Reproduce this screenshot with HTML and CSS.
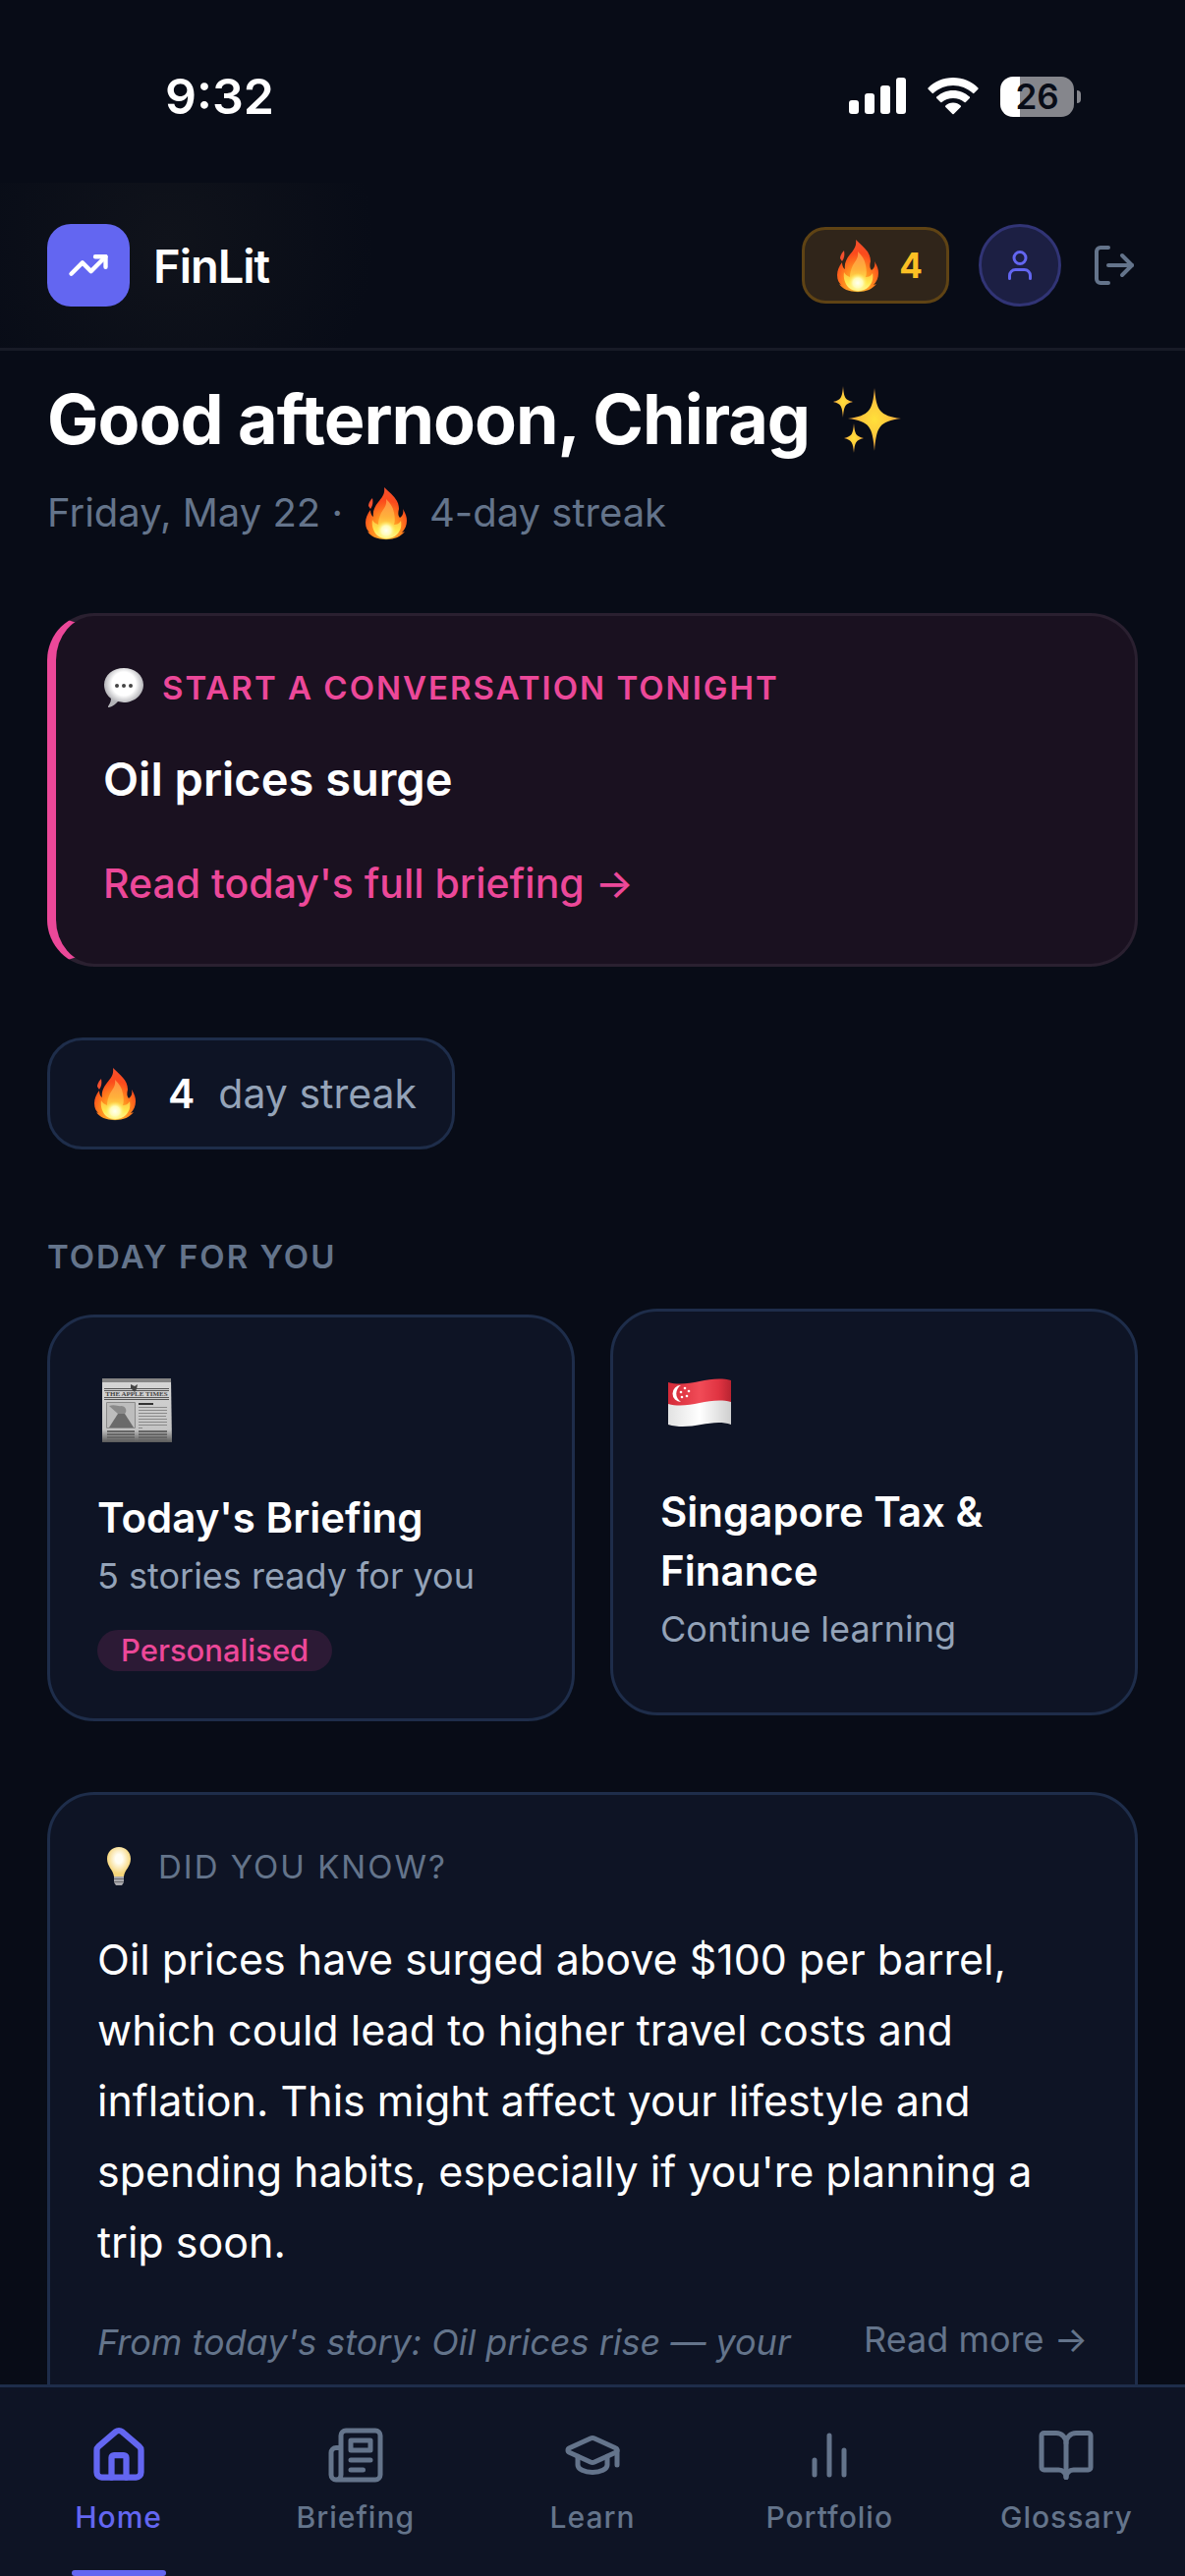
FILE: index.html
```html
<!DOCTYPE html>
<html lang="en">
<head>
    <meta charset="UTF-8">
    <meta name="viewport" content="width=device-width, initial-scale=1.0">
    <title>FinLit</title>
    <link rel="stylesheet" href="styles.css">
</head>
<body>
    <!-- Shared emoji artwork -->
    <svg class="sprite" width="0" height="0" aria-hidden="true">
        <defs>
            <radialGradient id="flameOuter" cx="50%" cy="85%" r="85%">
                <stop offset="0" stop-color="#ffd23c"/>
                <stop offset="0.4" stop-color="#ff8a1e"/>
                <stop offset="0.7" stop-color="#fb4a1c"/>
                <stop offset="1" stop-color="#f4502f"/>
            </radialGradient>
            <linearGradient id="flameInner" x1="0" y1="0" x2="0" y2="1">
                <stop offset="0" stop-color="#ff8f45"/>
                <stop offset="0.45" stop-color="#ffb13b"/>
                <stop offset="0.8" stop-color="#ffe94f"/>
                <stop offset="1" stop-color="#fff79a"/>
            </linearGradient>
            <radialGradient id="flameCore">
                <stop offset="0" stop-color="#fffff0"/>
                <stop offset="0.5" stop-color="#fffbb8"/>
                <stop offset="1" stop-color="#ffee58" stop-opacity="0"/>
            </radialGradient>
        </defs>
        <symbol id="flame" viewBox="0 0 60 60">
            <path fill="url(#flameOuter)" d="M28 4c1 7-2 10-6 15-4 5-6 10-5 15-2-1-3-4-3-7-3 4-5 8-5 13 0 5 2 8 4 10l-2-1c3 5 10 8 19 8s15-3 19-8l-3 1c3-3 5-7 5-12 0-4-1-7-4-12 1 4 0 7-3 9-2-2-2-5-1-9 0-10-8-15-15-22z"/>
            <path fill="#f4502f" d="M16 15c-3 3-4 6-4 8l2 3c2-3 3-6 2-11z"/>
            <path fill="url(#flameInner)" d="M30 16c1 6-2 9-5 14-2 4-3 8-3 12-3-1-5-3-6-5-1 6 1 12 5 16 5 4 15 4 20-1 4-4 5-9 4-14-2 3-4 4-7 4 1-3 1-7 0-12-1-6-4-10-8-14z"/>
            <ellipse cx="30" cy="48" rx="10" ry="10" fill="url(#flameCore)"/>
        </symbol>
    </svg>

    <div class="status-bar">
        <span class="status-time">9:32</span>
        <div class="status-icons">
            <svg class="signal" viewBox="0 0 58 38" aria-hidden="true">
                <rect x="0" y="23" width="10" height="14" rx="3"/>
                <rect x="16" y="16" width="10" height="21" rx="3"/>
                <rect x="32" y="8" width="10" height="29" rx="3"/>
                <rect x="48" y="0" width="10" height="37" rx="3"/>
            </svg>
            <svg class="wifi" viewBox="0 0 52 38" aria-hidden="true">
                <path d="M26 0C16 0 7 4 0.6 10.400a1 1 0 0 0 0 1.400l4 4a1 1 0 0 0 1.400 0C11.500 10.800 18.500 8 26 8s14.500 2.800 20 7.800a1 1 0 0 0 1.400 0l4-4a1 1 0 0 0 0-1.400C45 4 36 0 26 0z"/>
                <path d="M26 13c-6.500 0-12.400 2.500-16.800 6.600a1 1 0 0 0 0 1.400l4 4a1 1 0 0 0 1.400 0C17.700 22.200 21.700 21 26 21s8.300 1.200 11.400 4a1 1 0 0 0 1.400 0l4-4a1 1 0 0 0 0-1.400C38.400 15.500 32.500 13 26 13z"/>
                <path d="M26 25.500c-3 0-5.700 1.200-7.700 3a1 1 0 0 0 0 1.500l7 7a1 1 0 0 0 1.400 0l7-7a1 1 0 0 0 0-1.500c-2-1.800-4.700-3-7.700-3z"/>
            </svg>
            <div class="battery"><span class="battery-level">26</span></div>
        </div>
    </div>

    <header class="app-header">
        <a href="#" class="brand">
            <span class="brand-mark">
                <svg class="icon" viewBox="0 0 24 24" aria-hidden="true">
                    <path d="M22 7l-8.500 8.500-5-5L2 17"/>
                    <path d="M16 7h6v6"/>
                </svg>
            </span>
            <span class="brand-name">FinLit</span>
        </a>
        <div class="header-actions">
            <span class="streak-badge">
                <svg class="flame" aria-hidden="true"><use href="#flame"/></svg>
                4
            </span>
            <button type="button" class="avatar" aria-label="Profile">
                <svg class="icon" viewBox="0 0 24 24" aria-hidden="true">
                    <path d="M19 21v-2a4 4 0 0 0-4-4H9a4 4 0 0 0-4 4v2"/>
                    <circle cx="12" cy="7" r="4"/>
                </svg>
            </button>
            <button type="button" class="logout" aria-label="Log out">
                <svg class="icon" viewBox="0 0 24 24" aria-hidden="true">
                    <path d="M9 21H5a2 2 0 0 1-2-2V5a2 2 0 0 1 2-2h4"/>
                    <path d="M16 17l5-5-5-5"/>
                    <path d="M21 12H9"/>
                </svg>
            </button>
        </div>
    </header>

    <main>
        <h1 class="greeting">
            Good afternoon, Chirag
            <svg class="sparkles" viewBox="0 0 70 68" aria-hidden="true">
                <defs>
                    <radialGradient id="sparkleFill">
                        <stop offset="0" stop-color="#ffe03a"/>
                        <stop offset="0.5" stop-color="#fdc93c"/>
                        <stop offset="1" stop-color="#e79a3c"/>
                    </radialGradient>
                </defs>
                <g fill="url(#sparkleFill)">
                    <path d="M42 2c2 23 5 28 27 31-22 3-25 8-27 33-2-25-5-30-27-33 22-3 25-8 27-31z"/>
                    <path d="M10 0c1 12 2 14 10 16-8 2-9 4-10 16-1-12-2-14-10-16 8-2 9-4 10-16z"/>
                    <path d="M21 38c1 11 2 13 10 15-8 2-9 4-10 15-1-11-2-13-10-15 8-2 9-4 10-15z"/>
                </g>
            </svg>
        </h1>
        <p class="subtitle">
            <span>Friday, May 22 ·</span>
            <svg class="flame" aria-hidden="true"><use href="#flame"/></svg>
            <span>4-day streak</span>
        </p>

        <section class="card conversation">
            <p class="label">
                <svg class="bubble" viewBox="0 0 42 42" aria-hidden="true">
                    <defs>
                        <radialGradient id="bubbleFill" cy="40%">
                            <stop offset="0.6" stop-color="#ffffff"/>
                            <stop offset="1" stop-color="#b4b4b8"/>
                        </radialGradient>
                    </defs>
                    <path fill="url(#bubbleFill)" d="M21 1C10 1 1 8 1 18c0 6 3 11 7 14 0 4-2 6-3 8 0 1 0 1 1 1 4-1 7-4 9-6l6 1c11 0 20-8 20-18S32 1 21 1z"/>
                    <circle cx="14" cy="19" r="2" fill="#444"/>
                    <circle cx="21" cy="19" r="2" fill="#444"/>
                    <circle cx="28" cy="19" r="2" fill="#444"/>
                </svg>
                Start a conversation tonight
            </p>
            <h2 class="conversation-title">Oil prices surge</h2>
            <a href="#" class="conversation-link">Read today's full briefing →</a>
        </section>

        <div class="streak-chip">
            <svg class="flame" aria-hidden="true"><use href="#flame"/></svg>
            <strong>4</strong>
            <span>day streak</span>
        </div>

        <h2 class="label section-label">Today for you</h2>
        <div class="tiles">
            <a href="#" class="card tile">
                <svg class="tile-icon" viewBox="0 0 80 94" aria-hidden="true">
                    <defs>
                        <linearGradient id="paper" x1="0" y1="0" x2="0" y2="1">
                            <stop offset="0" stop-color="#d6d6d6"/>
                            <stop offset="0.8" stop-color="#c4c4c4"/>
                            <stop offset="1" stop-color="#5a5a5a"/>
                        </linearGradient>
                    </defs>
                    <path fill="url(#paper)" d="M5 14h70l1 65H5z"/>
                    <path fill="#858585" d="M5 14h70v4H5z"/>
                    <path stroke="#555" d="M7 24.500h66M7 26.500h66M7 33.500h66M7 35.500h66"/>
                    <path fill="#444" d="M34 20l4 2 3-2-1 5-2 3-4-4z"/>
                    <text x="40" y="32" class="masthead">THE APPLE TIMES</text>
                    <path fill="#bdbdbd" stroke="#8a8a8a" d="M9.500 38.500h29v26h-29z"/>
                    <path fill="#6a6a6a" d="M12 64l9-14h7l9 14z"/>
                    <path fill="#8a8a8a" d="M12 42c6-2 10 1 12 0 5 0 7 5 4 8h-7z"/>
                    <path stroke="#333" stroke-width="2" d="M42 40h15"/>
                    <path stroke="#8a8a8a" d="M42 43.500h29M42 46.500h29M42 49.500h29M42 52.500h28M42 55.500h29M42 58.500h29M42 61.500h29M42 64.500h4"/>
                    <path stroke="#666" stroke-width="2" d="M10 68h28M10 71h28M10 74h28M10 77h28M42 68h29M42 71h29M42 74h29M42 77h29"/>
                </svg>
                <h3 class="tile-title">Today's Briefing</h3>
                <p class="tile-text">5 stories ready for you</p>
                <span class="pill">Personalised</span>
            </a>
            <a href="#" class="card tile raised">
                <svg class="tile-icon" viewBox="0 0 80 94" aria-hidden="true">
                    <defs>
                        <linearGradient id="flagRed">
                            <stop offset="0" stop-color="#d42a38"/>
                            <stop offset="0.5" stop-color="#f14b57"/>
                            <stop offset="0.8" stop-color="#e03442"/>
                            <stop offset="1" stop-color="#b92431"/>
                        </linearGradient>
                        <linearGradient id="flagWhite">
                            <stop offset="0" stop-color="#e2e2e2"/>
                            <stop offset="0.5" stop-color="#ffffff"/>
                            <stop offset="1" stop-color="#cfcfcf"/>
                        </linearGradient>
                    </defs>
                    <path fill="url(#flagWhite)" d="M8 44c22 6 42-8 64-2v25c-20-7-40 7-64 0z"/>
                    <path fill="url(#flagRed)" d="M8 24c22 6 42-8 64-2v22c-22-6-42 8-64 2z"/>
                    <path fill="#fff" d="M21 27a8.500 8.500 0 1 0 0 17a10 10 0 0 1 0-17z"/>
                    <g fill="#fff">
                        <circle cx="25" cy="30" r="1.300"/>
                        <circle cx="21" cy="34" r="1.300"/>
                        <circle cx="29" cy="33" r="1.300"/>
                        <circle cx="22" cy="39" r="1.300"/>
                        <circle cx="27" cy="38" r="1.300"/>
                    </g>
                </svg>
                <h3 class="tile-title">Singapore Tax &amp; Finance</h3>
                <p class="tile-text">Continue learning</p>
            </a>
        </div>

        <section class="card did-you-know">
            <p class="label">
                <svg class="bulb" viewBox="0 0 44 42" aria-hidden="true">
                    <defs>
                        <radialGradient id="bulbFill" cy="40%">
                            <stop offset="0.3" stop-color="#fffdf2"/>
                            <stop offset="1" stop-color="#f6d67c"/>
                        </radialGradient>
                    </defs>
                    <path fill="url(#bulbFill)" d="M22 1c-7 0-12 5-12 12 0 8 6 11 7 18h10c1-7 7-10 7-18 0-7-5-12-12-12z"/>
                    <path fill="#a9a9ad" d="M17 31h10v6l-2 3h-6l-2-3z"/>
                    <path stroke="#6c6c70" d="M17 33.500h10M17 36.500h10"/>
                </svg>
                Did you know?
            </p>
            <p class="fact">Oil prices have surged above $100 per barrel, which could lead to higher travel costs and inflation. This might affect your lifestyle and spending habits, especially if you're planning a trip soon.</p>
            <div class="fact-footer">
                <em class="fact-source">From today's story: Oil prices rise — your</em>
                <a href="#" class="read-more">Read more →</a>
            </div>
        </section>
    </main>

    <nav class="tab-bar">
        <a href="#" class="tab active">
            <svg class="icon" viewBox="0 0 24 24" aria-hidden="true">
                <path d="M15 21v-8a1 1 0 0 0-1-1h-4a1 1 0 0 0-1 1v8"/>
                <path d="M3 10a2 2 0 0 1 .709-1.528l7-5.999a2 2 0 0 1 2.582 0l7 5.999A2 2 0 0 1 21 10v9a2 2 0 0 1-2 2H5a2 2 0 0 1-2-2z"/>
            </svg>
            Home
        </a>
        <a href="#" class="tab">
            <svg class="icon" viewBox="0 0 24 24" aria-hidden="true">
                <path d="M4 22h16a2 2 0 0 0 2-2V4a2 2 0 0 0-2-2H8a2 2 0 0 0-2 2v16a2 2 0 0 1-2 2Zm0 0a2 2 0 0 1-2-2v-9c0-1.100.9-2 2-2h2"/>
                <path d="M18 14h-8M15 18h-5M10 6h8v4h-8V6Z"/>
            </svg>
            Briefing
        </a>
        <a href="#" class="tab">
            <svg class="icon" viewBox="0 0 24 24" aria-hidden="true">
                <path d="M21.420 10.922a1 1 0 0 0-.019-1.838L12.830 5.180a2 2 0 0 0-1.660 0L2.600 9.080a1 1 0 0 0 0 1.832l8.570 3.908a2 2 0 0 0 1.660 0z"/>
                <path d="M22 10v6M6 12.500V16a6 3 0 0 0 12 0v-3.500"/>
            </svg>
            Learn
        </a>
        <a href="#" class="tab">
            <svg class="icon" viewBox="0 0 24 24" aria-hidden="true">
                <path d="M18 20V10M12 20V4M6 20v-6"/>
            </svg>
            Portfolio
        </a>
        <a href="#" class="tab">
            <svg class="icon" viewBox="0 0 24 24" aria-hidden="true">
                <path d="M12 7v14"/>
                <path d="M3 18a1 1 0 0 1-1-1V4a1 1 0 0 1 1-1h5a4 4 0 0 1 4 4 4 4 0 0 1 4-4h5a1 1 0 0 1 1 1v13a1 1 0 0 1-1 1h-6a3 3 0 0 0-3 3 3 3 0 0 0-3-3z"/>
            </svg>
            Glossary
        </a>
    </nav>
</body>
</html>
```
FILE: styles.css
```css
* {
    box-sizing: border-box;
}

body {
    font-family: Inter, 'Liberation Sans', sans-serif;
    margin: 0;
    background-color: #080c17;
    color: #fff;
    font-size: 40px;
    line-height: 63px;
}

h1, h2, h3, p {
    margin: 0;
}

a {
    color: inherit;
    text-decoration: none;
}

button {
    background: none;
    border: none;
    padding: 0;
    cursor: pointer;
}

svg {
    display: block;
    flex-shrink: 0;
}

.sprite {
    position: absolute;
}

.icon {
    fill: none;
    stroke: currentColor;
    stroke-width: 2;
    stroke-linecap: round;
    stroke-linejoin: round;
}

.flame {
    width: 60px;
    height: 60px;
}

/* Status bar */
.status-bar {
    display: flex;
    justify-content: space-between;
    align-items: center;
    height: 186px;
    padding: 10px 113px 0 168px;
}

.status-time {
    font-size: 50px;
    font-weight: 600;
}

.status-icons {
    display: flex;
    align-items: center;
    gap: 22px;
    fill: #fff;
}

.signal {
    width: 58px;
    height: 38px;
}

.wifi {
    width: 52px;
    height: 38px;
}

.battery {
    position: relative;
    width: 75px;
    height: 41px;
    border-radius: 13px;
    background: linear-gradient(90deg, #fff 20px, #85868c 20px);
    color: #080c17;
    font-size: 35px;
    font-weight: 600;
    line-height: 41px;
    text-align: center;
}

.battery::after {
    content: "";
    position: absolute;
    left: 78px;
    top: 14px;
    width: 4px;
    height: 13px;
    border-radius: 0 6px 6px 0;
    background: #85868c;
}

/* Header */
.app-header {
    display: flex;
    justify-content: space-between;
    align-items: center;
    height: 171px;
    padding: 0 48px;
    border-bottom: 3px solid #181b27;
    background: radial-gradient(circle 210px at 170px 60px, #10131b, transparent);
}

.brand {
    display: flex;
    align-items: center;
    gap: 24px;
}

.brand-mark {
    display: flex;
    align-items: center;
    justify-content: center;
    width: 84px;
    height: 84px;
    border-radius: 24px;
    background: #6366f1;
}

.brand-mark .icon {
    width: 42px;
    height: 42px;
    stroke-width: 2.5;
}

.brand-name {
    font-size: 47px;
    font-weight: 600;
    letter-spacing: -1px;
}

.header-actions {
    display: flex;
    align-items: center;
    gap: 30px;
}

.streak-badge {
    display: flex;
    align-items: center;
    gap: 12px;
    height: 78px;
    padding: 0 24px;
    border: 3px solid #5f4314;
    border-radius: 24px;
    background: #30251a;
    color: #fbbf24;
    font-size: 35px;
    font-weight: 700;
}

.avatar {
    display: flex;
    align-items: center;
    justify-content: center;
    width: 84px;
    height: 84px;
    border: 3px solid #313475;
    border-radius: 50%;
    background: #1c1f43;
    color: #6366f1;
}

.avatar .icon {
    width: 36px;
    height: 36px;
}

.logout {
    color: #64748b;
}

.logout .icon {
    width: 48px;
    height: 48px;
}

/* Main content */
main {
    padding: 30px 48px 48px;
}

.greeting {
    display: flex;
    align-items: center;
    gap: 24px;
    font-size: 70px;
    font-weight: 700;
    line-height: 80px;
    letter-spacing: -1px;
}

.sparkles {
    width: 70px;
    height: 68px;
}

.subtitle {
    display: flex;
    align-items: center;
    gap: 14px;
    margin: 24px 0 72px;
    line-height: 61px;
    color: #64748b;
}

.card {
    display: block;
    border: 3px solid #1e2d4a;
    border-radius: 48px;
    padding: 48px;
    background: #0e1425;
}

.label {
    display: flex;
    align-items: center;
    gap: 18px;
    font-size: 33px;
    font-weight: 600;
    line-height: 50px;
    letter-spacing: 2px;
    text-transform: uppercase;
    color: #64748b;
}

.conversation {
    border-color: #2a2030;
    border-left: 9px solid #ec4899;
    background: #1a1120;
}

.conversation .label {
    color: #ec4899;
}

.bubble {
    width: 42px;
    height: 42px;
}

.conversation-title {
    margin: 34px 0 42px;
    font-size: 47px;
    font-weight: 600;
    line-height: 67px;
}

.conversation-link {
    display: block;
    margin-bottom: 2px;
    color: #ec4899;
    font-size: 41px;
    font-weight: 500;
}

.streak-chip {
    display: flex;
    align-items: center;
    gap: 24px;
    width: fit-content;
    height: 114px;
    margin: 72px 0 84px;
    padding: 0 36px;
    border: 3px solid #1e2d4a;
    border-radius: 36px;
    background: #0e1425;
    color: #94a3b8;
    font-size: 41px;
}

.streak-chip strong {
    color: #fff;
    font-weight: 600;
}

.section-label {
    margin-bottom: 34px;
}

.tiles {
    display: grid;
    grid-template-columns: 1fr 1fr;
    gap: 36px;
    margin-bottom: 72px;
}

.raised {
    transform: translateY(-6px);
}

.tile-icon {
    width: 80px;
    height: 94px;
    margin-bottom: 32px;
}

.masthead {
    font-family: 'Liberation Serif', serif;
    font-size: 7px;
    font-weight: 700;
    text-anchor: middle;
    fill: #444;
}

.tile-title {
    font-size: 42px;
    font-weight: 600;
    line-height: 60px;
}

.tile-text {
    font-size: 36px;
    line-height: 59px;
    color: #94a3b8;
}

.pill {
    display: block;
    width: fit-content;
    margin-top: 25px;
    padding: 0 24px;
    border-radius: 21px;
    background: #2c1a35;
    color: #ec4899;
    font-size: 31px;
    font-weight: 500;
    line-height: 42px;
}

/* Did you know */
.did-you-know {
    padding-bottom: 78px;
}

.did-you-know .label {
    font-weight: 400;
}

.bulb {
    width: 44px;
    height: 42px;
}

.fact {
    margin: 33px 0 36px;
    font-size: 43px;
    line-height: 72px;
}

.fact-footer {
    display: flex;
    justify-content: space-between;
    align-items: flex-start;
    gap: 36px;
    font-size: 36px;
    color: #64748b;
}

.fact-source {
    line-height: 60px;
}

.read-more {
    line-height: 54px;
    white-space: nowrap;
}

/* Bottom tab bar */
.tab-bar {
    position: fixed;
    left: 0;
    right: 0;
    bottom: 0;
    display: flex;
    height: 195px;
    border-top: 3px solid #1e2d4a;
    background: #0e1425;
}

.tab {
    position: relative;
    flex: 1;
    display: flex;
    flex-direction: column;
    align-items: center;
    gap: 12px;
    padding-top: 39px;
    color: #64748b;
    font-size: 30px;
    font-weight: 500;
    line-height: 42px;
    letter-spacing: 1px;
}

.tab .icon {
    width: 60px;
    height: 60px;
}

.tab.active {
    color: #6366f1;
}

.tab.active .icon {
    stroke-width: 2.5;
}

.tab.active::after {
    content: "";
    position: absolute;
    bottom: 0;
    width: 96px;
    height: 6px;
    border-radius: 3px;
    background: #6366f1;
}
```
